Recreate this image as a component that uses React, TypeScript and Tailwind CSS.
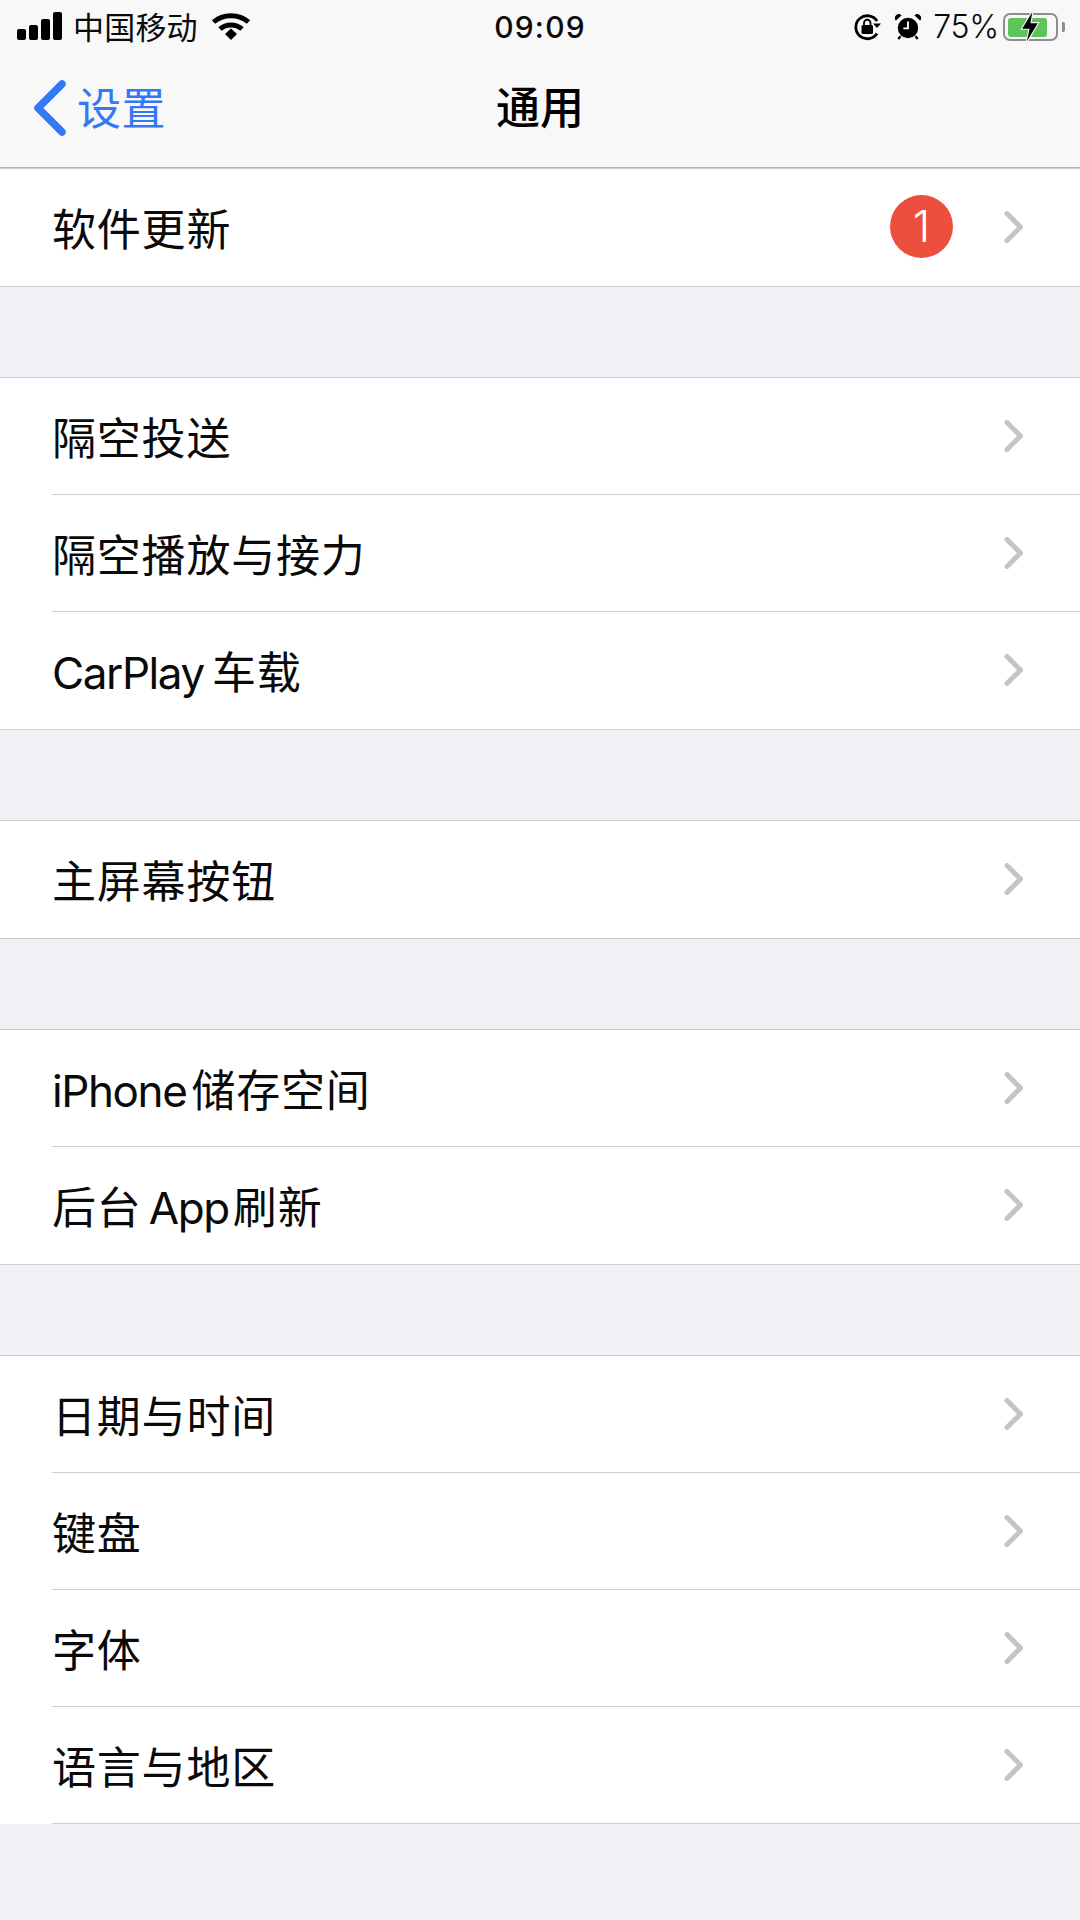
import type { ReactNode } from "react";

const font = { cjk: "font-['Inter','Noto_Sans_CJK_SC',sans-serif]" };

function Chevron() {
	return (
		<svg width="20" height="32" viewBox="0 0 20 32" fill="none" className="shrink-0">
			<path d="M3 2.500 L16.500 16 L3 29.500" stroke="#c4c4c7" strokeWidth="5" strokeLinecap="round" strokeLinejoin="round" />
		</svg>
	);
}

// Latin runs sit tighter than the CJK ones in the reference
function Latin({ children, className }: { children: ReactNode; className: string }) {
	return <span className={`tracking-[-1.4px] ${className}`}>{children}</span>;
}

type RowData = { id: string; label: ReactNode; badge?: string };

function Row({ label, divider, badge }: { label: ReactNode; divider: boolean; badge?: string }) {
	return (
		<div className="pl-[52px] bg-white">
			<div className={`h-[117px] flex items-center pr-[56px] ${divider ? "border-b border-[#cfcfd2]" : ""}`}>
				<span className="text-[44px] leading-none text-[#0a0a0a] tracking-[0.8px] [word-spacing:-6px] pt-[5px]">{label}</span>
				<div className="ml-auto flex items-center pb-[1px]">
					{badge && (
						<div className="w-[63px] h-[63px] mr-[51px] mb-[2px] rounded-full bg-[#ec4f3d] text-white text-[44px] font-light flex items-center justify-center">
							{badge}
						</div>
					)}
					<Chevron />
				</div>
			</div>
		</div>
	);
}

function Group({ rows, inset }: { rows: RowData[]; inset?: boolean }) {
	return (
		<div className={`border-t border-[#cfcfd2] bg-white ${inset ? "" : "border-b"}`}>
			{rows.map((r, i) => (
				<Row key={r.id} label={r.label} badge={r.badge} divider={i < rows.length - 1 || !!inset} />
			))}
		</div>
	);
}

function StatusBar() {
	return (
		<div className="h-[54px] flex items-center relative pl-[17px] pr-[15px] text-[#0a0a0a]">
			<div className="flex items-end gap-[3px] h-[26px] mb-[1px]">
				<div className="w-[9px] h-[11px] rounded-[2px] bg-black" />
				<div className="w-[9px] h-[15px] rounded-[2px] bg-black" />
				<div className="w-[9px] h-[21px] rounded-[2px] bg-black" />
				<div className="w-[9px] h-[28px] rounded-[2px] bg-black" />
			</div>
			<span className="ml-[11px] text-[31px] leading-none tracking-[0.2px]">中国移动</span>
			<svg width="40" height="30" viewBox="0 0 40 30" className="ml-[13px]" fill="none">
				<path d="M2.500 10 C12 1.500 28 1.500 37.500 10" stroke="#000" strokeWidth="5" strokeLinecap="butt" />
				<path d="M9 17 C15 11.500 25 11.500 31 17" stroke="#000" strokeWidth="5" />
				<path d="M14 22 L20 16.500 L26 22 L20 28 Z" fill="#000" />
			</svg>
			<span className="absolute left-0 right-0 text-center text-[30px] font-medium leading-none tracking-[1.2px]">09:09</span>
			<div className="ml-auto flex items-center">
				<svg width="30" height="30" viewBox="0 0 30 30" fill="none">
					<path d="M25 21.500 A11.500 11.500 0 1 1 25 9" stroke="#000" strokeWidth="2.800" />
					<path d="M21 11.500 H29 L25 16 Z" fill="#000" />
					<rect x="9.500" y="13" width="11.500" height="9" rx="1.500" fill="#000" />
					<path d="M12 13 V11 A3.200 3.200 0 0 1 18.500 11 V13" stroke="#000" strokeWidth="1.800" />
				</svg>
				<svg width="26" height="30" viewBox="0 0 28 30" className="ml-[13px]" fill="none">
					<circle cx="14" cy="16" r="11" fill="#000" />
					<path d="M14 9 V16.500 H9" stroke="#fff" strokeWidth="2" />
					<path d="M1 8 L7 2.500 A4 4 0 0 0 1 8 Z M27 8 L21 2.500 A4 4 0 0 1 27 8 Z" fill="#000" />
					<path d="M6 25 L3.500 28 M22 25 L24.500 28" stroke="#000" strokeWidth="2.500" />
				</svg>
				<span className="ml-[12px] text-[32px] leading-none font-light tracking-[-0.3px]">75%</span>
				<div className="relative ml-[4px] w-[55px] h-[28px] rounded-[7px] border-[2.500px] border-[#8e8e90] p-[2.500px]">
					<div className="w-[85%] h-full rounded-[3px] bg-[#5cc45a]" />
					<svg width="22" height="36" viewBox="0 0 20 32" className="absolute left-[14px] top-[-6px]">
						<path d="M13 0 L2 18 H9 L6 32 L18 12 H11 Z" fill="#000" stroke="#f7f7f8" strokeWidth="1" />
					</svg>
				</div>
				<div className="ml-[4px] w-[3px] h-[10px] rounded-r-[2px] bg-[#8e8e90]" />
			</div>
		</div>
	);
}

export default function App() {
	return (
		<div className={`w-[1080px] h-[1920px] overflow-hidden bg-[#f0f0f5] ${font.cjk}`}>
			<div className="h-[168px] bg-[#f8f8f9] border-b border-[#b4b4b6] flex flex-col">
				<StatusBar />
				<div className="flex-1 flex items-center relative pl-[33px] pb-[6px]">
					<svg width="34" height="56" viewBox="0 0 34 56" fill="none">
						<path d="M29 4 L5 28 L29 52" stroke="#3478f6" strokeWidth="7.500" strokeLinecap="round" strokeLinejoin="round" />
					</svg>
					<span className="ml-[10px] text-[44px] leading-none text-[#3478f6] tracking-[0.5px] pt-[2px]">设置</span>
					<span className="absolute left-0 right-0 text-center text-[44px] leading-none font-medium text-black">通用</span>
				</div>
			</div>
			<div className="flex flex-col gap-[90px]">
				<Group rows={[{ id: "update", label: "软件更新", badge: "1" }]} />
				<Group
					rows={[
						{ id: "airdrop", label: "隔空投送" },
						{ id: "airplay", label: "隔空播放与接力" },
						{ id: "carplay", label: <><Latin className="mr-[1px]">CarPlay</Latin> 车载</> },
					]}
				/>
				<Group rows={[{ id: "home", label: "主屏幕按钮" }]} />
				<Group
					rows={[
						{ id: "storage", label: <><Latin className="mr-[5px]">iPhone</Latin>储存空间</> },
						{ id: "refresh", label: <>后台 <Latin className="mr-[4px]">App</Latin>刷新</> },
					]}
				/>
				<Group
					inset
					rows={[
						{ id: "date", label: "日期与时间" },
						{ id: "keyboard", label: "键盘" },
						{ id: "font", label: "字体" },
						{ id: "language", label: "语言与地区" },
					]}
				/>
			</div>
		</div>
	);
}
